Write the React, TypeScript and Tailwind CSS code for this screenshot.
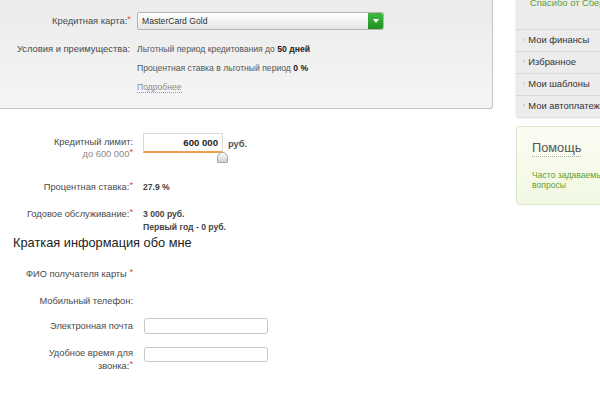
import React from "react"

const font = { fontFamily: '"Liberation Sans", Arial, sans-serif' }

function Req() {
  return <span className="relative -top-[2px] text-[#e2483d]">*</span>
}

function Label({ children, className = "" }: { children: React.ReactNode; className?: string }) {
  return (
    <div className={`w-[133px] shrink-0 text-right text-[9.3px] leading-[12px] text-[#4a4a4a] ${className}`}>{children}</div>
  )
}

const menu = ["Мои финансы", "Избранное", "Мои шаблоны", "Мои автоплатежи"]

export default function App() {
  return (
    <div className="flex h-[400px] w-[600px] overflow-hidden bg-white" style={font}>
      <div className="w-[493px] shrink-0">
        {/* card panel */}
        <div className="h-[109px] rounded-br-[3px] border-r border-b border-[#c4c4c4] bg-gradient-to-b from-[#ebebeb] to-[#f5f5f5] pt-[12px]">
          <div className="flex items-center">
            <div className="w-[131px] shrink-0 text-right text-[9.4px] text-[#4a4a4a]">
              Кредитная карта:<Req />
            </div>
            <div className="ml-[6px] flex h-[18px] w-[247px] items-stretch overflow-hidden rounded-[2px] border border-[#b4b4b4] bg-gradient-to-b from-white to-[#e4e4e4]">
              <div className="flex flex-1 items-center pl-[4px] text-[8.6px] text-[#333]">MasterCard Gold</div>
              <div className="flex w-[15px] items-center justify-center rounded-r-[2px] bg-gradient-to-b from-[#41b941] to-[#1e8f1e]">
                <svg width="6" height="4" viewBox="0 0 6 4">
                  <path d="M0 0h6L3 4z" fill="#fff" />
                </svg>
              </div>
            </div>
          </div>
          <div className="mt-[13px] flex">
            <div className="w-[130px] shrink-0 text-right text-[9.4px] leading-[12px] text-[#4a4a4a]">
              Условия и преимущества:
            </div>
            <div className="ml-[7px] text-[8.6px] leading-[12px] text-[#555]">
              <div>
                Льготный период кредитования до <b className="text-[#222]">50 дней</b>
              </div>
              <div className="mt-[7px]">
                Процентная ставка в льготный период <b className="text-[#222]">0 %</b>
              </div>
              <div className="mt-[7px]">
                <span className="border-b border-dotted border-[#9a9a9a] text-[#8c8c8c]">Подробнее</span>
              </div>
            </div>
          </div>
        </div>

        {/* limit */}
        <div className="mt-[24px] flex items-start">
          <Label className="pt-[3px]">
            <div>Кредитный лимит:</div>
            <div className="text-[#8a8a8a]">
              до 600 000<Req />
            </div>
          </Label>
          <div className="relative ml-[10px]">
            <div className="h-[20px] w-[80px] border border-b-2 border-[#dadada] border-b-[#f0a04a] bg-white pr-[4px] text-right text-[9.6px] leading-[18px] font-bold text-[#222]">
              600 000
            </div>
            <div className="absolute top-[19px] left-[74px] h-[11px] w-[11px] rounded-t-full border border-[#a8a8a8] bg-gradient-to-b from-white to-[#cfcfcf]" />
          </div>
          <div className="ml-[5px] pt-[4px] text-[9.4px] font-bold text-[#555]">руб.</div>
        </div>

        <div className="mt-[21px] flex items-start">
          <Label>
            Процентная ставка:<Req />
          </Label>
          <div className="ml-[10px] text-[8.6px] leading-[12px] font-bold text-[#444]">27.9 %</div>
        </div>

        <div className="mt-[15px] flex items-start">
          <Label>
            Годовое обслуживание:<Req />
          </Label>
          <div className="ml-[10px] text-[8.6px] leading-[13px] font-bold text-[#444]">
            <div>3 000 руб.</div>
            <div>Первый год - 0 руб.</div>
          </div>
        </div>

        <div className="mt-[1px] pl-[13px] text-[12.8px] leading-[16px] text-[#222]">Краткая информация обо мне</div>

        <div className="mt-[17px] flex">
          <Label>
            ФИО получателя карты <Req />
          </Label>
        </div>
        <div className="mt-[15px] flex">
          <Label>Мобильный телефон:</Label>
        </div>
        <div className="mt-[11px] flex items-center">
          <Label>Электронная почта</Label>
          <div className="ml-[11px] h-[16px] w-[124px] rounded-[3px] border border-[#c6c6c6] bg-white" />
        </div>
        <div className="mt-[13px] flex items-start">
          <Label className="leading-[13px]">
            Удобное время для
            <br />
            звонка:<Req />
          </Label>
          <div className="ml-[11px] h-[15px] w-[124px] rounded-[3px] border border-[#c6c6c6] bg-white" />
        </div>
      </div>

      {/* sidebar */}
      <div className="ml-[23px] flex-1">
        <div className="-mt-[14px] rounded-bl-[4px] rounded-tl-[4px] bg-[#ececec] shadow-[0_1px_2px_rgba(0,0,0,0.18)]">
          <div className="h-[43px] pt-[11px] pl-[14px] text-[9.4px] leading-[12px] whitespace-nowrap text-[#5f9e35]">
            Спасибо от Сбербанка
          </div>
          {menu.map((m) => (
            <div
              key={m}
              className="flex h-[22px] items-center border-t border-[#dadada] pl-[7px] text-[9.4px] whitespace-nowrap text-[#333]"
            >
              <span className="mr-[3px] text-[7px] text-[#b5b5b5]">›</span>
              <span>{m}</span>
            </div>
          ))}
        </div>

        <div className="mt-[9px] h-[79px] rounded-l-[4px] border border-r-0 border-[#dfe6cf] bg-gradient-to-b from-[#fbfdf3] to-[#f1f8e3] pt-[8px] pl-[15px]">
          <div className="inline-block border-b border-dotted border-[#a8a8a8] text-[12.8px] leading-[16px] text-[#555]">
            Помощь
          </div>
          <div className="mt-[11px] text-[8.6px] leading-[10px] whitespace-nowrap text-[#5f9e35]">
            Часто задаваемые
            <br />
            вопросы
          </div>
        </div>
      </div>
    </div>
  )
}
